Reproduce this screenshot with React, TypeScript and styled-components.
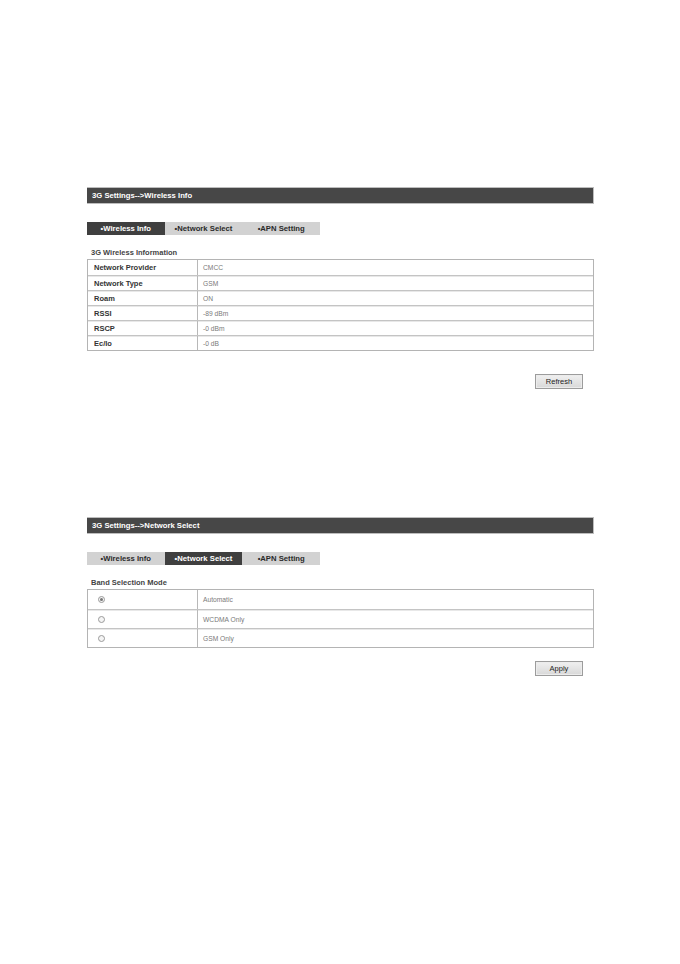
import React from "react";
import styled, { createGlobalStyle } from "styled-components";

const Global = createGlobalStyle`
  html, body { margin: 0; padding: 0; background: #ffffff; }
  body { font-family: "Liberation Sans", Arial, sans-serif; }
  * { box-sizing: border-box; }
`;

const Page = styled.div`
  width: 680px;
  height: 964px;
  padding: 187px 0 0 87px;
  display: flex;
  flex-direction: column;
`;

const Section = styled.section<{ $gapAfter?: number }>`
  width: 507px;
  display: flex;
  flex-direction: column;
  margin-bottom: ${(p) => p.$gapAfter ?? 0}px;
`;

const TitleBar = styled.div`
  height: 17px;
  background: #474747;
  border: 1px solid #bdbdbd;
  border-left: none;
  color: #ffffff;
  font-weight: bold;
  font-size: 7.7px;
  display: flex;
  align-items: center;
  padding-left: 5px;
`;

const Tabs = styled.div`
  margin-top: 18px;
  display: flex;
  width: 233px;
  height: 13px;
  background: #d2d2d2;
`;

const Tab = styled.div<{ $active?: boolean }>`
  flex: 1;
  display: flex;
  align-items: center;
  justify-content: center;
  font-size: 7.7px;
  font-weight: bold;
  color: ${(p) => (p.$active ? "#ffffff" : "#2a2a2a")};
  background: ${(p) => (p.$active ? "#3f3f3f" : "#d2d2d2")};
`;

const SubTitle = styled.div`
  margin-top: 11px;
  height: 13px;
  font-size: 7.5px;
  font-weight: bold;
  color: #444444;
  padding-left: 4px;
  display: flex;
  align-items: center;
`;

const Table = styled.div`
  border: 1px solid #b4b4b4;
  display: flex;
  flex-direction: column;
`;

const Row = styled.div<{ $h: number }>`
  display: grid;
  grid-template-columns: 110px 1fr;
  height: ${(p) => p.$h}px;
  & + & {
    border-top: 1px solid #c4c4c4;
    box-shadow: inset 0 1px 0 #e8e8e8;
  }
`;

const LabelCell = styled.div`
  display: flex;
  align-items: center;
  padding-left: 6px;
  font-size: 7.5px;
  font-weight: bold;
  color: #333333;
  border-right: 1px solid #b8b8b8;
`;

const ValueCell = styled.div`
  display: flex;
  align-items: center;
  padding-left: 5px;
  font-size: 6.7px;
  color: #7a7a7a;
`;

const RadioCell = styled.div`
  display: flex;
  align-items: center;
  padding-left: 10px;
  border-right: 1px solid #b8b8b8;
`;

const Radio = styled.span<{ $checked?: boolean }>`
  width: 7px;
  height: 7px;
  border-radius: 50%;
  border: 1px solid #9a9a9a;
  background: #f4f4f4;
  display: flex;
  align-items: center;
  justify-content: center;
  &::after {
    content: "";
    width: 3px;
    height: 3px;
    border-radius: 50%;
    background: ${(p) => (p.$checked ? "#777777" : "transparent")};
  }
`;

const ButtonRow = styled.div<{ $top: number }>`
  margin-top: ${(p) => p.$top}px;
  display: flex;
  justify-content: flex-end;
  padding-right: 11px;
`;

const Button = styled.button`
  width: 48px;
  height: 15px;
  padding: 0;
  font-family: "Liberation Sans", Arial, sans-serif;
  font-size: 7.5px;
  color: #222222;
  background: linear-gradient(#f0f0f0, #d8d8d8);
  border: 1px solid #9c9c9c;
  box-shadow: inset 0 0 0 1px #ececec;
`;

const info = [
  ["Network Provider", "CMCC"],
  ["Network Type", "GSM"],
  ["Roam", "ON"],
  ["RSSI", "-89 dBm"],
  ["RSCP", "-0 dBm"],
  ["Ec/Io", "-0 dB"],
];

const bands = [
  ["Automatic", true],
  ["WCDMA Only", false],
  ["GSM Only", false],
] as const;

export default function App() {
  return (
    <>
      <Global />
      <Page>
        <Section $gapAfter={128}>
          <TitleBar>3G Settings--&gt;Wireless Info</TitleBar>
          <Tabs>
            <Tab $active>•Wireless Info</Tab>
            <Tab>•Network Select</Tab>
            <Tab>•APN Setting</Tab>
          </Tabs>
          <SubTitle>3G Wireless Information</SubTitle>
          <Table>
            {info.map(([k, v]) => (
              <Row key={k} $h={15}>
                <LabelCell>{k}</LabelCell>
                <ValueCell>{v}</ValueCell>
              </Row>
            ))}
          </Table>
          <ButtonRow $top={23}>
            <Button>Refresh</Button>
          </ButtonRow>
        </Section>
        <Section>
          <TitleBar>3G Settings--&gt;Network Select</TitleBar>
          <Tabs>
            <Tab>•Wireless Info</Tab>
            <Tab $active>•Network Select</Tab>
            <Tab>•APN Setting</Tab>
          </Tabs>
          <SubTitle>Band Selection Mode</SubTitle>
          <Table>
            {bands.map(([label, checked]) => (
              <Row key={label} $h={19}>
                <RadioCell>
                  <Radio $checked={checked} />
                </RadioCell>
                <ValueCell>{label}</ValueCell>
              </Row>
            ))}
          </Table>
          <ButtonRow $top={13}>
            <Button>Apply</Button>
          </ButtonRow>
        </Section>
      </Page>
    </>
  );
}
